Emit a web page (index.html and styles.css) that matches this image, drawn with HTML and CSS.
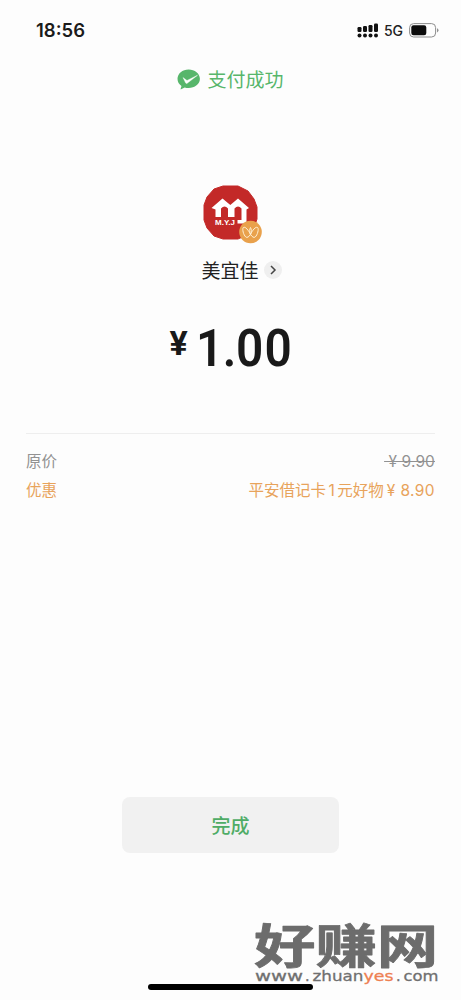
FILE: index.html
```html
<!DOCTYPE html>
<html lang="zh-CN">
<head>
<meta charset="utf-8">
<meta name="viewport" content="width=device-width, initial-scale=1">
<title>支付成功</title>
<link rel="stylesheet" href="styles.css">
</head>
<body>
<main class="screen">
  <header class="status-bar">
    <span class="clock">18:56</span>
    <div class="status-icons">
      <svg class="signal" width="22" height="15" viewBox="0 0 22 15">
        <g fill="#111">
          <rect x="0.5" y="4" width="4" height="5" rx="1.2"/><rect x="6" y="3" width="4" height="6" rx="1.2"/><rect x="11.5" y="2" width="4" height="7" rx="1.2"/><rect x="17" y="0.5" width="4" height="8.5" rx="1.2"/>
          <circle cx="2.5" cy="12.5" r="2"/><circle cx="8" cy="12.5" r="2"/><circle cx="13.5" cy="12.5" r="2"/><circle cx="19" cy="12.5" r="2"/>
        </g>
      </svg>
      <span class="network">5G</span>
      <svg class="battery" width="30" height="15" viewBox="0 0 30 15">
        <rect x="0.6" y="0.6" width="26" height="13.4" rx="4" fill="none" stroke="#8d8d8d"/>
        <rect x="2.3" y="2.3" width="15" height="10" rx="2.2" fill="#0b0b0b"/>
        <path d="M28.2 5.2v4.2q1.2-.6 1.2-2.1t-1.2-2.1z" fill="#777"/>
      </svg>
    </div>
  </header>

  <div class="result">
    <svg width="24" height="21" viewBox="0 0 24 21">
      <path d="M11.6.5C5.4.5.5 4.600.5 9.800c0 3 1.500 5.600 4 7.300l-.9 2.800c-.1.4.2.6.5.4l3.600-1.800c1.200.4 2.500.6 3.900.6 6.200 0 11.300-4.100 11.300-9.300S17.800.5 11.600.5z" fill="#57b66b"/>
      <path d="M6 8.600l4 2.900L20.500 6.300 10.200 14.300q-.9.500-1.500-.2z" fill="#fff" stroke="#fff" stroke-width=".4"/>
    </svg>
    <span class="result-text">支付成功</span>
  </div>

  <section class="merchant">
    <svg class="logo" width="60" height="60" viewBox="0 0 60 60">
      <path d="M20 1H35L45 6 51 14 54 22V34L51 43 44 50 35 54H20L11 51 4 43 1 35V20L4 12 11 4z" fill="#c32928" stroke="#c32928" stroke-linejoin="round"/>
      <path d="M8.500 23L19.500 13.500 27.300 20 35 13.500 46 23 43.500 24.500V38.500H34.500V35H38.500V23.500Q35 19.500 31.500 23.500V32H25V23.500Q21.500 19.500 18 23.500V32H12.500V24.500z" fill="#fff"/>
      <text class="logo-text" x="12" y="39.500" textLength="20" lengthAdjust="spacingAndGlyphs">M.Y.J</text>
      <circle cx="47.500" cy="47" r="11.300" fill="#e9a14c"/>
      <path d="M47.500 49.300C46 52 44 53 42.800 52 40.500 50 38.900 44 40.400 42.500 42.500 41.200 45.500 45.500 47.500 49.300 49.500 45.500 52.500 41.200 54.600 42.500 56.100 44 54.500 50 52.200 52 51 53 49 52 47.500 49.300 46.300 47 46.500 44 47.500 42.500 48.500 44 48.700 47 47.500 49.300z" fill="none" stroke="#fff0d5" stroke-width="1"/>
    </svg>
    <div class="merchant-row">
      <span class="merchant-name">美宜佳</span>
      <span class="arrow"><svg width="8" height="10" viewBox="0 0 8 10"><path d="M2 1l4 4-4 4" fill="none" stroke="#444" stroke-width="1.500"/></svg></span>
    </div>
  </section>

  <svg class="amount" width="140" height="70" viewBox="0 -10 140 70">
    <text class="yen" x="8.500" y="33">¥</text>
    <text class="digits" transform="translate(35 44) scale(.92 1)"><tspan x="0">1</tspan><tspan x="29">.</tspan><tspan x="43.500">0</tspan><tspan x="74.500">0</tspan></text>
  </svg>

  <dl class="details">
    <div class="detail"><dt>原价</dt><dd class="old">&nbsp;¥ 9.90</dd></div>
    <div class="detail discount"><dt>优惠</dt><dd>平安借记卡<span class="one">1</span>元好物<span class="cost">¥ 8.90</span></dd></div>
  </dl>

  <button class="done" type="button">完成</button>
  <div class="home-bar"></div>
  <svg class="watermark" width="205" height="83" viewBox="0 -7 205 83">
    <text class="wm-name" transform="translate(4 45.500) scale(1.280 .96)">好赚网</text>
    <g class="wm-url">
      <text x="5" y="64" textLength="48" lengthAdjust="spacingAndGlyphs">www</text>
      <text x="55" y="64">.</text>
      <text x="62.500" y="64" textLength="51" lengthAdjust="spacingAndGlyphs">zhuan</text>
      <text class="wm-accent" x="113.500" y="64" textLength="30" lengthAdjust="spacingAndGlyphs">yes</text>
      <text x="146" y="64">.</text>
      <text x="153.500" y="64" textLength="35" lengthAdjust="spacingAndGlyphs">com</text>
    </g>
  </svg>
</main>
</body>
</html>
```
FILE: styles.css
```css
* { box-sizing: border-box; }
body { margin: 0; background: #fdfdfd; font-family: "Inter", "Noto Sans CJK SC", sans-serif; }
.screen { position: relative; width: 461px; height: 1000px; display: flex; flex-direction: column; align-items: center; overflow: hidden; background: #fdfdfd; }
.status-bar { width: 100%; height: 60px; padding: 0 22px 0 36px; display: flex; justify-content: space-between; align-items: center; }
.clock { font-size: 18.500px; font-weight: 600; color: #1b1b1b; }
.status-icons { display: flex; align-items: center; }
.network { margin: 0 6px 0 5px; font-size: 14px; font-weight: 500; color: #222; }
.result { height: 38px; display: flex; align-items: center; gap: 6px; color: #57b66b; }
.result-text { font: 400 19px/36px "Noto Sans CJK SC", sans-serif; }
.merchant { margin-top: 87px; display: flex; flex-direction: column; align-items: center; }
.logo { margin-left: 6px; }
.logo-text { font: 700 6.500px "Liberation Sans", sans-serif; fill: #fff; }
.merchant-row { display: flex; align-items: center; gap: 5px; height: 30px; margin-top: 10px; margin-left: 22px; }
.merchant-name { font: 400 19px/30px "Noto Sans CJK SC", sans-serif; color: #222; }
.arrow { width: 18px; height: 18px; border-radius: 50%; background: #efefef; display: flex; align-items: center; justify-content: center; }
.amount { margin-top: 27px; }
.yen { font: 700 34px "Roboto", sans-serif; fill: #191919; }
.digits { font: 600 52px "Roboto", sans-serif; fill: #191919; }
.details { width: 409px; margin: 51px 0 0; padding-top: 14px; border-top: 1px solid #eee; }
.detail { display: flex; justify-content: space-between; height: 28.500px; line-height: 28px; font-size: 15.500px; color: #929292; }
.detail dd { margin: 0; }
.detail .old { text-decoration: line-through; letter-spacing: .1px; }
.detail.discount { color: #e8a35b; }
.one { margin: 0 2.500px; }
.cost { margin-left: 3px; letter-spacing: .4px; }
.done { width: 217px; height: 56px; margin-top: 292px; padding: 0; border: 0; border-radius: 8px; background: #f1f1f1; color: #4fac66; font: 500 19px/56px "Noto Sans CJK SC", sans-serif; }
.home-bar { width: 165px; height: 6px; margin-top: 131px; border-radius: 3px; background: #000; }
.watermark { position: absolute; left: 250px; top: 910px; }
.wm-name { font: 700 48px "Noto Sans CJK SC", sans-serif; fill: #6c6c6c; stroke: #6c6c6c; stroke-width: .8px; stroke-linejoin: round; }
.wm-url { font: 400 14.500px "DejaVu Sans", sans-serif; fill: #707070; stroke: #707070; stroke-width: .3px; }
.wm-url .wm-accent { fill: #ee8052; stroke: #ee8052; }
```
